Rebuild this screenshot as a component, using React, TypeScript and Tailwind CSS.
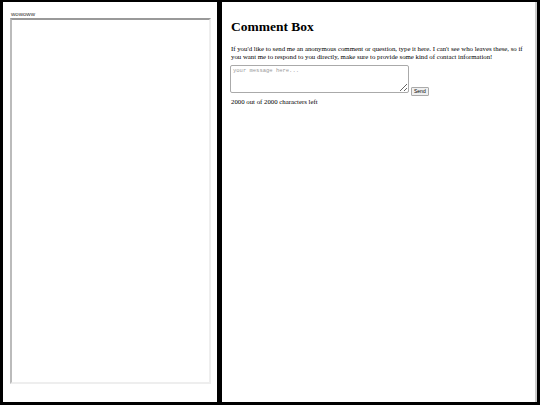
import React from "react";

export default function App() {
  return (
    <div className="w-[540px] h-[405px] bg-black flex gap-[5px] pl-[3px] pr-[3px] pt-[2px] pb-[3px] overflow-hidden">
      <div className="w-[214px] bg-white flex flex-col pl-[7px] pr-[6px] pt-[9px] pb-[18px]">
        <div className="text-[6px] leading-[7px] pl-[1px] text-[#333] font-['Liberation_Sans',sans-serif]">wowoww</div>
        <div className="flex-1 border-2 border-t-[#999] border-l-[#bbb] border-r-[#eee] border-b-[#eee] bg-white"></div>
      </div>
      <div className="flex-1 bg-white border-r-[2px] border-[#ccc] pl-[9px] pt-[17px] font-['Liberation_Serif',serif] text-black">
        <h1 className="text-[13.5px] leading-[16px] font-bold">Comment Box</h1>
        <p className="mt-[10px] text-[6.8px] leading-[7.5px] w-[300px]">
          If you'd like to send me an anonymous comment or question, type it here. I can't see who leaves these, so if you want me to respond to you directly, make sure to provide some kind of contact information!
        </p>
        <div className="mt-[5px] flex items-end gap-[2px] -ml-[1px]">
          <textarea
            placeholder="your message here..."
            className="w-[179px] h-[28px] border border-[#aaa] rounded-[2px] px-[2px] py-[1px] text-[5.5px] leading-[7px] font-['Liberation_Mono',monospace] placeholder:text-[#999] outline-none"
          />
          <button className="-mb-[3px] h-[9px] px-[2px] border border-[#aaa] bg-[#f0f0f0] rounded-[1px] text-[5px] leading-[7px] font-['Liberation_Sans',sans-serif] text-black">
            Send
          </button>
        </div>
        <div className="mt-[5px] text-[6.8px] leading-[8px]">2000 out of 2000 characters left</div>
      </div>
    </div>
  );
}
